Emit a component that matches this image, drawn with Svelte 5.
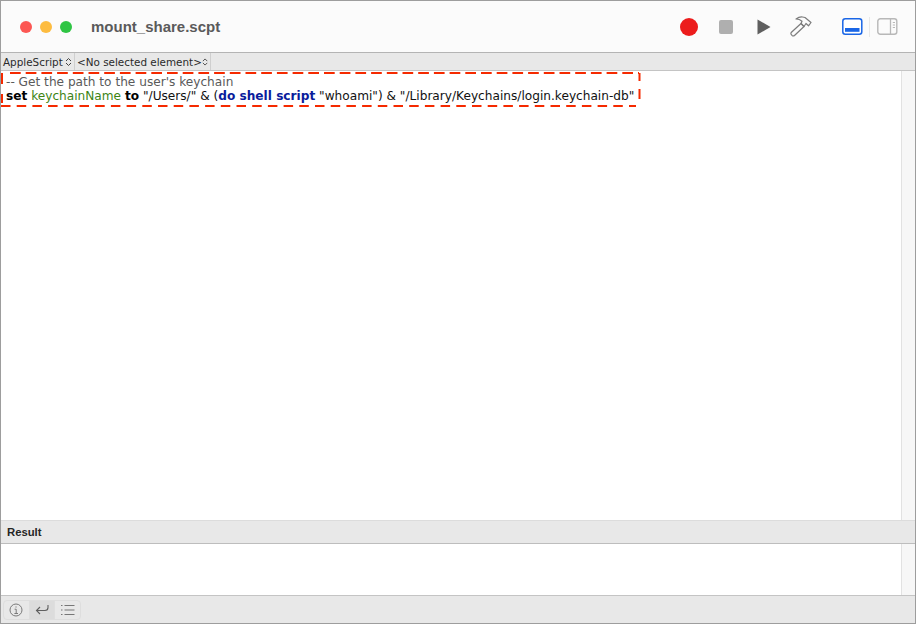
<script>
  let title = 'mount_share.scpt';
</script>

<div class="window">
  <header class="titlebar">
    <div class="lights">
      <span class="light red"></span>
      <span class="light yellow"></span>
      <span class="light green"></span>
    </div>
    <span class="title">{title}</span>
    <div class="tools">
      <span class="record"></span>
      <span class="stop"></span>
      <svg class="play" width="14" height="16" viewBox="0 0 14 16"><path d="M0.5 0.5 L13.5 8 L0.5 15.5 Z" fill="#5f5f5f" /></svg>
      <svg class="hammer" width="22" height="22" viewBox="0 0 22 22" fill="none" stroke="#7c7c7c" stroke-width="1.2" stroke-linejoin="round">
        <path d="M1.2 16.5 L11 7.5 L14 10.5 L4.5 19.5 Q3.2 20.5 2 19.3 L1.2 18.4 Q0.6 17.3 1.2 16.5 Z" />
        <path d="M6 3 Q9.5 0.5 12.5 1 L15 1.5 L21 6.5 L18.5 9.8 L16 7.5 L14 10.5 L11 7.5 L12 5.2 Q9.5 3 6 3 Z" />
      </svg>
      <svg class="pane-bottom" width="21" height="17" viewBox="0 0 21 17">
        <rect x="0.8" y="0.8" width="19" height="15.4" rx="2.5" fill="#fff" stroke="#1a66e6" stroke-width="1.5" />
        <rect x="3" y="10" width="14.5" height="3.8" fill="#1a66e6" />
      </svg>
      <span class="tool-sep"></span>
      <svg class="pane-side" width="21" height="17" viewBox="0 0 21 17" fill="none" stroke="#b8b8b8">
        <rect x="0.8" y="0.8" width="19" height="15.4" rx="2.5" stroke-width="1.4" />
        <path d="M13.5 1 V16" stroke-width="1.3" />
        <path d="M15.8 4.5 H18 M15.8 7 H18 M15.8 9.5 H18" stroke-width="1" />
      </svg>
    </div>
  </header>

  <nav class="navbar">
    <span class="picker lang">AppleScript<svg class="updown" width="7" height="10" viewBox="0 0 7 10" fill="none" stroke="#444" stroke-width="1"><path d="M1 4 L3.5 1.5 L6 4 M1 6 L3.5 8.5 L6 6" /></svg></span>
    <span class="picker element">&lt;No selected element&gt;<svg class="updown" width="7" height="10" viewBox="0 0 7 10" fill="none" stroke="#444" stroke-width="1"><path d="M1 4 L3.5 1.5 L6 4 M1 6 L3.5 8.5 L6 6" /></svg></span>
  </nav>

  <section class="editor">
    <div class="code">
      <div class="comment">-- Get the path to the user's keychain</div>
      <div><b>set</b> <span class="var">keychainName</span> <b>to</b> "/Users/" &amp; (<b class="cmd">do shell script</b> "whoami") &amp; "/Library/Keychains/login.keychain-db"</div>
    </div>
    <div class="scrollbar"></div>
    <svg class="highlight" width="641" height="37" viewBox="0 0 641 37" fill="none" stroke="#f52a00" stroke-width="2">
      <path d="M10 2 H639" stroke-dasharray="10.7 5" />
      <path d="M1 35 H636" stroke-dasharray="9.5 6.2" />
      <path d="M2 2 V13 M2 23 V32" />
      <path d="M639.5 2 V10 M639.5 18 V28" />
    </svg>
  </section>

  <div class="result-head">Result</div>

  <section class="result">
    <div class="result-body"></div>
    <div class="scrollbar"></div>
  </section>

  <footer class="statusbar">
    <div class="segments">
      <span class="seg">
        <svg width="14" height="14" viewBox="0 0 14 14" fill="none" stroke="#7a7a7a"><circle cx="7" cy="7" r="6" /><path d="M5.6 6.2 H7.2 V10.4 M5.4 10.5 H9 M7 3.4 V4.6" /></svg>
      </span>
      <span class="seg active">
        <svg width="14" height="12" viewBox="0 0 14 12" fill="none" stroke="#606060" stroke-width="1.1"><path d="M13 1 V3.5 Q13 6.5 10 6.5 H1.5 M5 3 L1.5 6.5 L5 10" /></svg>
      </span>
      <span class="seg">
        <svg width="14" height="12" viewBox="0 0 14 12" fill="none" stroke="#777"><path d="M3.5 1.5 H13.5 M3.5 6 H13.5 M3.5 10.5 H13.5 M0 1.5 H1.5 M0 6 H1.5 M0 10.5 H1.5" /></svg>
      </span>
    </div>
  </footer>
</div>

<style>
  :global(body) {
    margin: 0;
    background: #fff;
  }

  .window {
    width: 916px;
    height: 624px;
    box-sizing: border-box;
    border: 1px solid #9d9d9d;
    display: flex;
    flex-direction: column;
    font-family: "Liberation Sans", Arial, sans-serif;
    overflow: hidden;
  }

  .titlebar {
    height: 52px;
    flex: none;
    box-sizing: border-box;
    display: flex;
    align-items: center;
    background: #fbfbfb;
    border-bottom: 1px solid #b4b4b4;
    padding-left: 19px;
  }

  .lights {
    display: flex;
    gap: 8px;
  }

  .light {
    width: 12px;
    height: 12px;
    border-radius: 50%;
  }
  .red { background: #fc5753; }
  .yellow { background: #fdbc40; }
  .green { background: #2fc544; }

  .title {
    margin-left: 19px;
    font-size: 15px;
    font-weight: bold;
    color: #5a5a5a;
  }

  .tools {
    margin-left: auto;
    display: flex;
    align-items: center;
    padding-right: 17px;
  }

  .record {
    width: 18px;
    height: 18px;
    border-radius: 50%;
    background: #ec1c1c;
  }

  .stop {
    width: 14px;
    height: 14px;
    margin-left: 21px;
    border-radius: 2px;
    background: #afafaf;
  }

  .play { margin-left: 24px; }
  .hammer { margin-left: 19px; }
  .pane-bottom { margin-left: 30px; }

  .tool-sep {
    width: 1px;
    height: 20px;
    margin: 0 7px 0 6px;
    background: #e8e8e8;
  }

  .navbar {
    height: 18px;
    flex: none;
    box-sizing: border-box;
    display: flex;
    background: #e8e8e8;
    border-bottom: 1px solid #c4c4c4;
    font-family: "DejaVu Sans", Verdana, sans-serif;
    font-size: 10.4px;
    color: #2a2a2a;
  }

  .picker {
    display: flex;
    align-items: center;
    justify-content: space-between;
    box-sizing: border-box;
    height: 17px;
    padding: 0 2px;
    border-right: 1px solid #cfcfcf;
    white-space: nowrap;
  }
  .lang { width: 74px; }
  .element { width: 136px; padding-left: 2px; }

  .editor {
    flex: 1;
    min-height: 0;
    position: relative;
    display: flex;
  }

  .code {
    flex: 1;
    padding: 4px 0 0 5px;
    font-family: "DejaVu Sans", Verdana, sans-serif;
    font-size: 12.15px;
    line-height: 14px;
    color: #111;
    white-space: nowrap;
  }

  .comment { color: #5a5a5a; }
  .code b { color: #000; }
  .code .cmd { color: #0a1c9c; }
  .var { color: #3d8414; }

  .scrollbar {
    width: 14px;
    flex: none;
    box-sizing: border-box;
    background: #f7f7f7;
    border-left: 1px solid #e2e2e2;
  }

  .highlight {
    position: absolute;
    left: -1px;
    top: 0;
    pointer-events: none;
  }

  .result-head {
    height: 24px;
    flex: none;
    box-sizing: border-box;
    display: flex;
    align-items: center;
    padding-left: 6px;
    background: #e8e8e8;
    border-top: 1px solid #dcdcdc;
    border-bottom: 1px solid #bdbdbd;
    font-size: 11.3px;
    font-weight: bold;
    color: #262626;
  }

  .result {
    height: 51px;
    flex: none;
    display: flex;
  }

  .result-body {
    flex: 1;
  }

  .statusbar {
    height: 28px;
    flex: none;
    box-sizing: border-box;
    display: flex;
    align-items: center;
    padding: 1px 0 0 2px;
    background: #e8e8e8;
    border-top: 1px solid #c4c4c4;
  }

  .segments {
    display: flex;
    width: 78px;
    height: 20px;
    box-sizing: border-box;
    border: 1px solid #dedede;
    border-radius: 4px;
    overflow: hidden;
  }

  .seg {
    flex: 1;
    display: flex;
    align-items: center;
    justify-content: center;
  }
  .seg + .seg {
    border-left: 1px solid #dedede;
  }
  .active {
    background: #dcdcdc;
  }
</style>
